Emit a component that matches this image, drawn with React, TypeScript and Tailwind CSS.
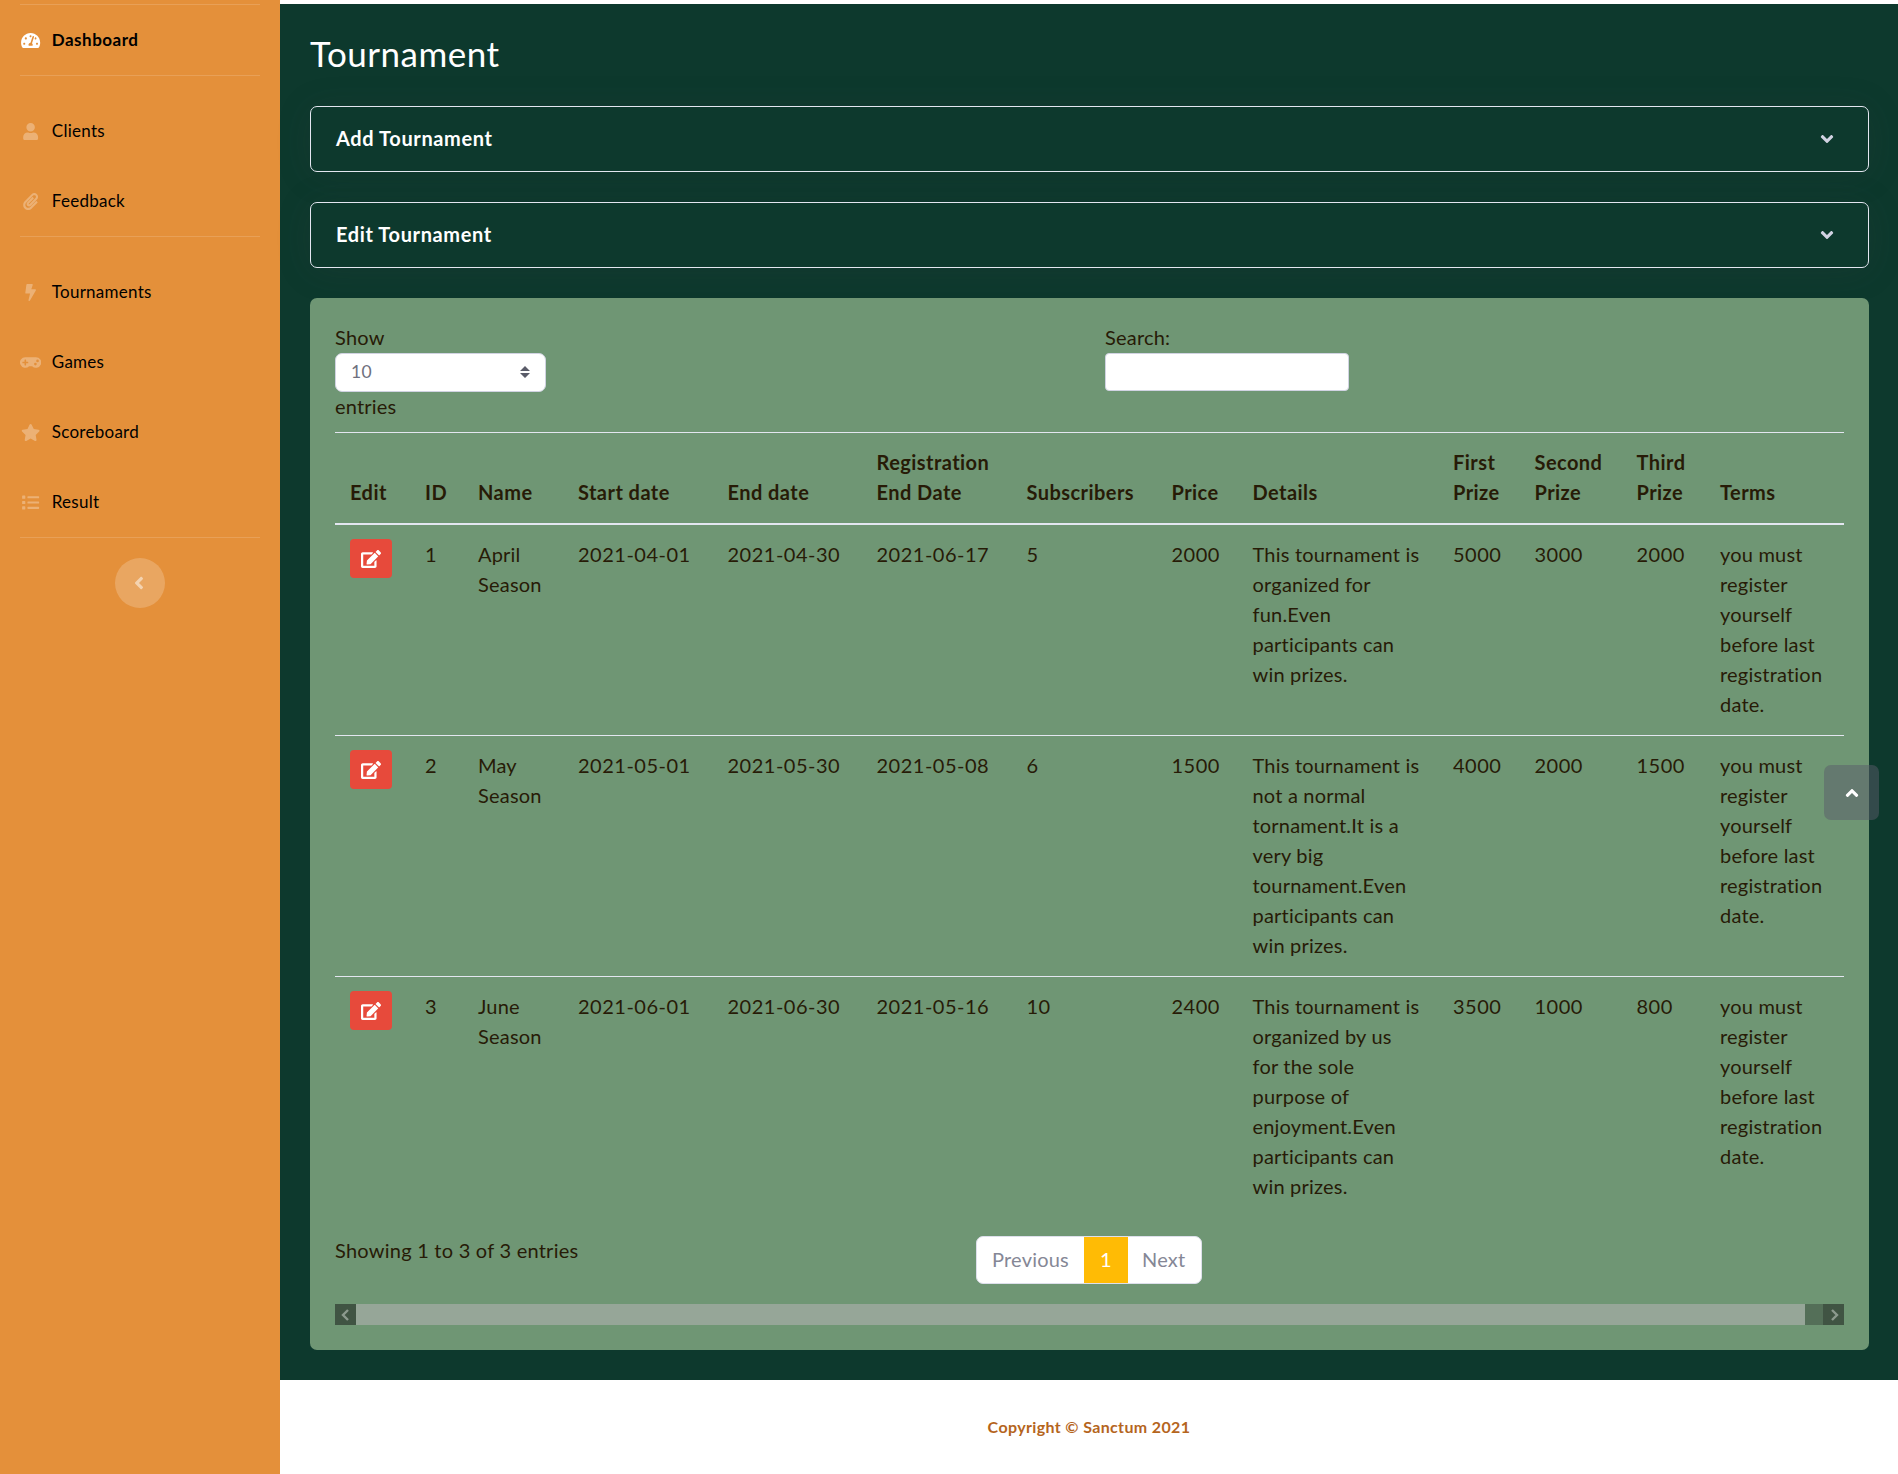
import React from "react";
import {
  FaTachometerAlt, FaUser, FaPaperclip, FaBolt, FaGamepad, FaStar, FaList,
  FaAngleLeft, FaAngleDown, FaAngleUp, FaEdit,
} from "react-icons/fa";

type Item = { icon: React.ElementType; label: string };

const groups: Item[][] = [
  [{ icon: FaUser, label: "Clients" }, { icon: FaPaperclip, label: "Feedback" }],
  [
    { icon: FaBolt, label: "Tournaments" },
    { icon: FaGamepad, label: "Games" },
    { icon: FaStar, label: "Scoreboard" },
    { icon: FaList, label: "Result" },
  ],
];

function NavItem({ icon: Icon, label, active }: Item & { active?: boolean }) {
  return (
    <a className={`flex h-[70px] items-center px-5 text-[17px] text-black ${active ? "font-bold tracking-[0.5px]" : "tracking-[0.27px]"}`}>
      <span className={`mr-[10.5px] flex shrink-0 ${active ? "text-white" : "text-white/30"}`}>
        <Icon className="h-[17px] w-[21.25px]" />
      </span>
      {label}
    </a>
  );
}

function Rule() {
  return <div className="mx-5 h-px shrink-0 bg-white/15" />;
}

function Sidebar() {
  return (
    <aside className="flex w-[280px] shrink-0 flex-col bg-[#e4903a] pt-1">
      <Rule />
      <NavItem icon={FaTachometerAlt} label="Dashboard" active />
      {groups.map((g, i) => (
        <div key={i}>
          <Rule />
          <div className="pt-5">
            {g.map((n) => <NavItem key={n.label} {...n} />)}
          </div>
        </div>
      ))}
      <Rule />
      <button className="mx-auto mt-5 flex h-[50px] w-[50px] items-center justify-center rounded-full bg-white/20 text-white/50">
        <FaAngleLeft className="mr-0.5 h-5 w-5" />
      </button>
    </aside>
  );
}

function Collapsed({ title }: { title: string }) {
  return (
    <section className="mb-[30px] flex h-[66px] items-center justify-between rounded-[7px] border border-[#e3e6f0] bg-[#0d392d] pr-[31px] pb-px pl-[25px] shadow-[0_3px_35px_rgba(58,59,69,0.15)]">
      <h6 className="pb-px text-[20px] font-bold tracking-[0.62px] text-white">{title}</h6>
      <FaAngleDown className="h-5 w-5 text-[#d1d3e2]" />
    </section>
  );
}

const heads = ["Edit", "ID", "Name", "Start date", "End date", "Registration\nEnd Date", "Subscribers", "Price", "Details", "First\nPrize", "Second\nPrize", "Third\nPrize", "Terms"];
const widths = [75, 53, 100, 149.5, 149, 150, 145, 81, 200.5, 81.5, 102, 83.5, 139];
const terms = "you must\nregister\nyourself\nbefore last\nregistration\ndate.";
const rows = [
  ["1", "April\nSeason", "2021-04-01", "2021-04-30", "2021-06-17", "5", "2000", "This tournament is\norganized for\nfun.Even\nparticipants can\nwin prizes.", "5000", "3000", "2000", terms],
  ["2", "May\nSeason", "2021-05-01", "2021-05-30", "2021-05-08", "6", "1500", "This tournament is\nnot a normal\ntornament.It is a\nvery big\ntournament.Even\nparticipants can\nwin prizes.", "4000", "2000", "1500", terms],
  ["3", "June\nSeason", "2021-06-01", "2021-06-30", "2021-05-16", "10", "2400", "This tournament is\norganized by us\nfor the sole\npurpose of\nenjoyment.Even\nparticipants can\nwin prizes.", "3500", "1000", "800", terms],
];

function DataTable() {
  return (
    <table className="w-full table-fixed border-separate border-spacing-0 text-left">
      <colgroup>
        {widths.map((w, i) => <col key={i} style={{ width: w }} />)}
      </colgroup>
      <thead>
        <tr>
          {heads.map((h) => (
            <th key={h} className="border-t border-b-2 border-[#e3e6f0] pt-[14px] pb-4 pl-[15px] align-bottom font-bold tracking-[0.45px] whitespace-pre">{h}</th>
          ))}
        </tr>
      </thead>
      <tbody>
        {rows.map((r, i) => {
          const line = i > 0 ? "border-t border-[#e3e6f0]" : "";
          return (
            <tr key={i}>
              <td className={`px-[15px] pt-[14px] align-top ${line}`}>
                <button className="flex h-[39px] w-[42px] items-center justify-center rounded bg-[#e74a3b] text-white">
                  <FaEdit className="h-[18px] w-[20px]" />
                </button>
              </td>
              {r.map((c, j) => (
                <td
                  key={j}
                  className={`pt-[14px] pb-4 pl-[15px] align-top whitespace-pre ${line} ${/^\d/.test(c) ? "tracking-[0.5px]" : "tracking-[0.2px]"}`}
                >
                  {c}
                </td>
              ))}
            </tr>
          );
        })}
      </tbody>
    </table>
  );
}

function Scrollbar() {
  return (
    <div className="mt-5 flex h-[21px] bg-[#546f58]">
      <div className="flex w-[21px] items-center justify-center bg-[#405443] pr-0.5">
        <svg viewBox="0 0 8 12" className="h-3 w-2 fill-none stroke-[#8c9a8e] stroke-[2.4]"><path d="M7 1 2 6l5 5" /></svg>
      </div>
      <div className="w-[1449px] bg-[#96a698]" />
      <div className="ml-auto flex w-[21px] items-center justify-center bg-[#405443] pl-0.5">
        <svg viewBox="0 0 8 12" className="h-3 w-2 fill-none stroke-[#8c9a8e] stroke-[2.4]"><path d="m1 1 5 5-5 5" /></svg>
      </div>
    </div>
  );
}

export default function App() {
  return (
    <div className="flex h-[1474px] w-[1898px] overflow-hidden bg-white font-['Lato',sans-serif] text-[20px] leading-[30px]">
      <Sidebar />
      <div className="flex flex-1 flex-col pt-1">
        <main className="h-[1376px] bg-[#0d392d] px-[30px] pr-[29px] pt-[28px]">
          <h1 className="mb-[32px] text-[35px] leading-[42px] tracking-[0.5px] text-white">Tournament</h1>
          <Collapsed title="Add Tournament" />
          <Collapsed title="Edit Tournament" />
          <section className="h-[1052px] rounded-[7px] bg-[#6f9674] p-[25px] tracking-[0.2px] text-[#271b07]">
            <div className="flex h-[109px]">
              <div className="w-[770px]">
                <div className="-mt-px mb-px">Show</div>
                <div className="flex h-[39px] w-[211px] items-center justify-between rounded-[7px] border border-[#d1d3e2] bg-white pr-[15px] pb-px pl-[15px] text-[17.5px] tracking-[0.3px] text-[#6e707e]">
                  10
                  <svg viewBox="0 0 10 12" className="h-3 w-[10px] fill-[#5a5c69]"><path d="M0 5 5 0l5 5zM0 7l5 5 5-5z" /></svg>
                </div>
                <div className="-mt-px">entries</div>
              </div>
              <div>
                <div className="-mt-px mb-px">Search:</div>
                <input className="block h-[38px] w-[244px] rounded-[4px] border border-[#d1d3e2] bg-white px-2" />
              </div>
            </div>
            <DataTable />
            <div className="mt-[19px] flex items-start">
              <div className="-mt-px w-[641px] tracking-[0.24px]">Showing 1 to 3 of 3 entries</div>
              <div className="flex h-12 overflow-hidden rounded-[7px] border border-[#dddfeb] bg-white leading-[45px] text-[#858796]">
                <span className="w-[107px] pl-[15px]">Previous</span>
                <span className="-my-px w-[44px] bg-[#ffbb05] text-center leading-[47px] text-white">1</span>
                <span className="w-[73px] pl-[14px]">Next</span>
              </div>
            </div>
            <Scrollbar />
          </section>
        </main>
        <footer className="flex flex-1 items-center justify-center pb-px text-[16px] font-bold tracking-[0.36px] text-[#b5651d]">Copyright © Sanctum 2021</footer>
      </div>
      <button className="fixed top-[765px] left-[1824px] flex h-[55px] w-[55px] items-center justify-center rounded-[7px] bg-[#5a5c69]/50 text-white">
        <FaAngleUp className="h-5 w-5" />
      </button>
    </div>
  );
}
